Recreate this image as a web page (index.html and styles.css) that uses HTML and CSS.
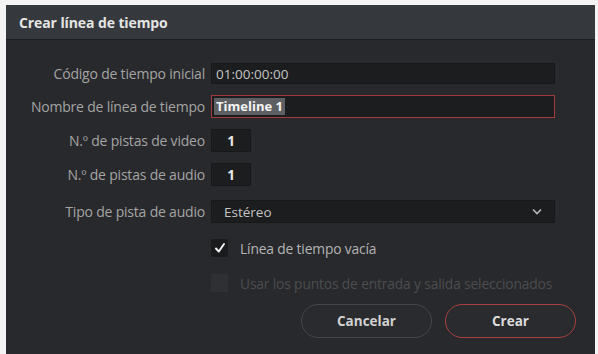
FILE: index.html
```html
<!DOCTYPE html>
<html lang="es">
<head>
<meta charset="utf-8">
<title>Crear línea de tiempo</title>
<link rel="stylesheet" href="styles.css">
</head>
<body>
<div class="dialog">
  <div class="titlebar">Crear línea de tiempo</div>
  <div class="content">
    <div class="form">
      <label class="lbl">Código de tiempo inicial</label>
      <div class="field wide"><span class="val">01:00:00:00</span></div>

      <label class="lbl">Nombre de línea de tiempo</label>
      <div class="field wide focus"><span class="sel">Timeline 1</span></div>

      <label class="lbl">N.º de pistas de video</label>
      <div class="field small"><span class="num">1</span></div>

      <label class="lbl">N.º de pistas de audio</label>
      <div class="field small"><span class="num">1</span></div>

      <label class="lbl lower">Tipo de pista de audio</label>
      <div class="field wide select lower">
        <span class="val">Estéreo</span>
        <svg class="chev" width="10" height="7" viewBox="0 0 10 7"><path d="M1 1.5 L5 5.5 L9 1.5" fill="none" stroke="#b8b8b8" stroke-width="1.6"/></svg>
      </div>

      <span></span>
      <div class="check">
        <span class="box on"><svg width="12" height="12" viewBox="0 0 12 12"><path d="M2 6.5 L4.8 9.5 L10 2" fill="none" stroke="#f2f2f2" stroke-width="2" stroke-linecap="round" stroke-linejoin="round"/></svg></span>
        <span class="ctext">Línea de tiempo vacía</span>
      </div>

      <span></span>
      <div class="check disabled">
        <span class="box"></span>
        <span class="ctext">Usar los puntos de entrada y salida seleccionados</span>
      </div>
    </div>
    <div class="buttons">
      <button class="btn">Cancelar</button>
      <button class="btn primary">Crear</button>
    </div>
  </div>
</div>
</body>
</html>
```

FILE: styles.css
```css
html, body {
  margin: 0;
  padding: 0;
  background: #f4f4f4;
}
body {
  width: 598px;
  height: 354px;
  overflow: hidden;
  font-family: "Open Sans", "Noto Sans", sans-serif;
}
.dialog {
  margin: 5px 3px 0 6px;
  height: 349px;
  background: #28292c;
  display: flex;
  flex-direction: column;
}
.titlebar {
  height: 34px;
  background: #35383c;
  border-bottom: 1px solid #1d1e20;
  color: #e4e4e4;
  font-weight: 700;
  font-size: 14px;
  padding-left: 13px;
  display: flex;
  align-items: center;
  letter-spacing: -0.1px;
}
.content {
  flex: 1;
  display: flex;
  flex-direction: column;
  padding: 23px 19px 16px 0;
}
.form {
  display: grid;
  grid-template-columns: 199px 344px;
  column-gap: 6px;
  row-gap: 11px;
  align-items: center;
}
.lbl {
  text-align: right;
  color: #a4a4a4;
  font-size: 14px;
  letter-spacing: -0.2px;
  white-space: nowrap;
}
.lower { margin-top: 3px; }
.field {
  height: 21px;
  background: #1c1d1f;
  border: 1px solid #17181a;
  box-sizing: border-box;
  display: flex;
  align-items: center;
  padding-left: 4px;
  color: #c4c4c4;
  font-size: 13.5px;
}
.field.wide { width: 344px; }
.field.small { width: 40px; justify-content: center; padding-left: 0; height: 23px; }
.field.focus {
  height: 23px;
  border: 1px solid #a23b3b;
  padding-left: 2px;
}
.field.select { height: 23px; justify-content: space-between; padding: 0 12px 0 12px; }
.sel {
  background: #5d5f63;
  color: #f4f4f4;
  font-weight: 700;
  font-size: 13px;
  padding: 1px 2px;
  line-height: 15px;
}
.num { color: #e8e8e8; font-weight: 700; }
.chev { display: block; }
.check {
  display: flex;
  align-items: center;
  gap: 12px;
  height: 18px;
  margin-top: 5px;
}
.check.disabled { margin-top: 6px; }
.box {
  width: 17px;
  height: 18px;
  box-sizing: border-box;
  background: #1a1b1d;
  display: flex;
  align-items: center;
  justify-content: center;
}
.check.disabled .box { background: #2f3033; }
.ctext {
  color: #b4b4b4;
  font-size: 13.8px;
  letter-spacing: -0.15px;
  white-space: nowrap;
}
.check.disabled .ctext { color: #4c4d50; }
.buttons {
  margin-top: auto;
  display: flex;
  justify-content: flex-end;
  gap: 13px;
}
.btn {
  width: 131px;
  height: 34px;
  border-radius: 17px;
  background: #2a2b2e;
  border: 1px solid #46474a;
  color: #d2d2d2;
  font-family: "Open Sans", "Noto Sans", sans-serif;
  font-weight: 700;
  font-size: 13.5px;
}
.btn.primary {
  border: 1.5px solid #a8413f;
  color: #dcdcdc;
}
```
